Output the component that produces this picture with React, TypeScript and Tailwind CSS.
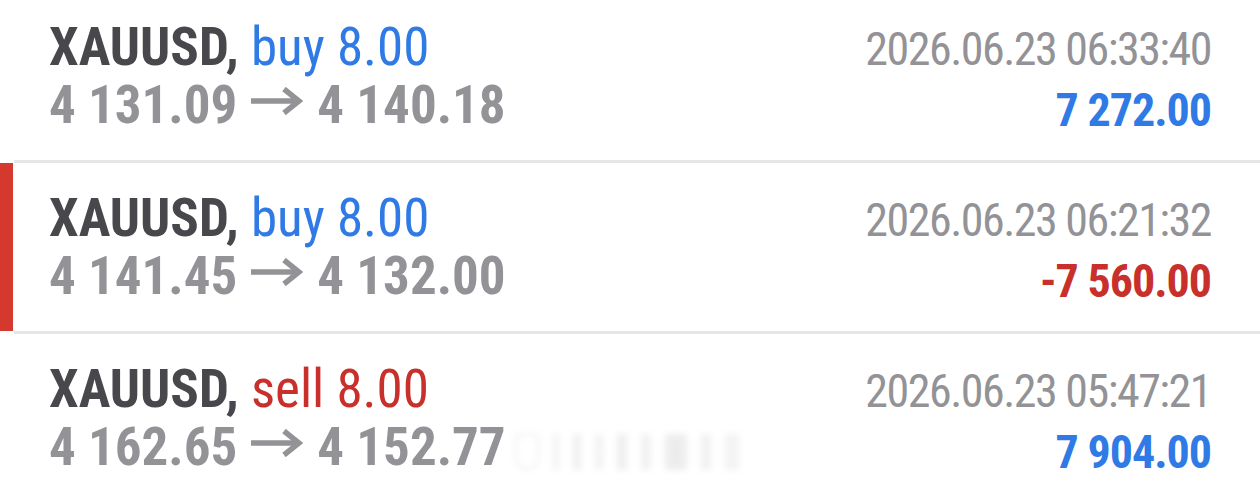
import React from "react";

type Trade = {
  side: "buy" | "sell";
  open: string;
  close: string;
  time: string;
  profit: string;
  marked?: boolean;
  smudge?: boolean;
};

const trades: Trade[] = [
  { side: "buy", open: "4 131.09", close: "4 140.18", time: "2026.06.23 06:33:40", profit: "7 272.00" },
  { side: "buy", open: "4 141.45", close: "4 132.00", time: "2026.06.23 06:21:32", profit: "-7 560.00", marked: true },
  { side: "sell", open: "4 162.65", close: "4 152.77", time: "2026.06.23 05:47:21", profit: "7 904.00", smudge: true },
];

const font = { fontFamily: "'Roboto Condensed', Roboto, 'Liberation Sans', sans-serif", fontStretch: "condensed" as const };

function Arrow() {
  return (
    <svg
      className="mx-[14px] inline-block h-[28px] w-[52px] align-[8px]"
      viewBox="0 0 52 28"
      fill="none"
      stroke="#939397"
      strokeWidth="5.5"
      strokeLinecap="butt"
      strokeLinejoin="miter"
    >
      <path d="M0 14H48" />
      <path d="M33 2L48 14L33 26" />
    </svg>
  );
}

function Row({ t }: { t: Trade }) {
  const neg = t.profit.startsWith("-");
  return (
    <div className="relative flex h-[168px] justify-between pl-[49px] pr-[49px]">
      {t.marked && <div className="absolute left-0 top-0 h-full w-[13px] bg-[#d5392e]" />}
      <div className="pt-[26px]">
        <div className="whitespace-nowrap text-[53px] leading-[58px]">
          <span className="font-bold text-[#47474c]">XAUUSD,</span>{" "}
          <span className={t.side === "buy" ? "text-[#2f7ae5]" : "text-[#c8302c]"}>
            {t.side} 8.00
          </span>
        </div>
        <div className="relative whitespace-nowrap text-[53px] font-bold leading-[58px] text-[#939397]">
          {t.open}
          <Arrow />
          {t.close}
          {t.smudge && (
            <span className="absolute left-[466px] top-[16px] flex h-[36px] w-[240px] gap-[14px] opacity-40 blur-[3px]">
              <span className="h-full w-[24px] rounded-b-full border-2 border-[#d6d6d6] bg-white" />
              <span className="h-full w-[6px] bg-[#e0e0e0]" />
              <span className="h-full w-[8px] bg-[#d8d8d8]" />
              <span className="h-full w-[8px] bg-[#dedede]" />
              <span className="h-full w-[10px] bg-[#d6d6d6]" />
              <span className="h-full w-[10px] bg-[#dedede]" />
              <span className="h-full w-[22px] bg-[#d2d2d2]" />
              <span className="h-full w-[10px] bg-[#dcdcdc]" />
              <span className="h-full w-[14px] bg-[#e2e2e2]" />
            </span>
          )}
        </div>
      </div>
      <div className="flex flex-col items-end pt-[28px]">
        <div className="whitespace-nowrap text-[46px] leading-[58px] tracking-[-1.5px] text-[#939397]">{t.time}</div>
        <div
          className={`whitespace-nowrap text-[46px] font-bold leading-[64px] tracking-[-1px] ${neg ? "text-[#c8302c]" : "text-[#2f7ae5]"}`}
        >
          {t.profit}
        </div>
      </div>
    </div>
  );
}

export default function App() {
  return (
    <div className="h-[489px] w-[1260px] overflow-hidden bg-white" style={font}>
      <div className="mt-[-8px]">
        {trades.map((t, i) => (
          <div key={i}>
            <Row t={t} />
            {i < trades.length - 1 && <div className="ml-[14px] h-[3px] bg-[#e6e6e6]" />}
          </div>
        ))}
      </div>
    </div>
  );
}
